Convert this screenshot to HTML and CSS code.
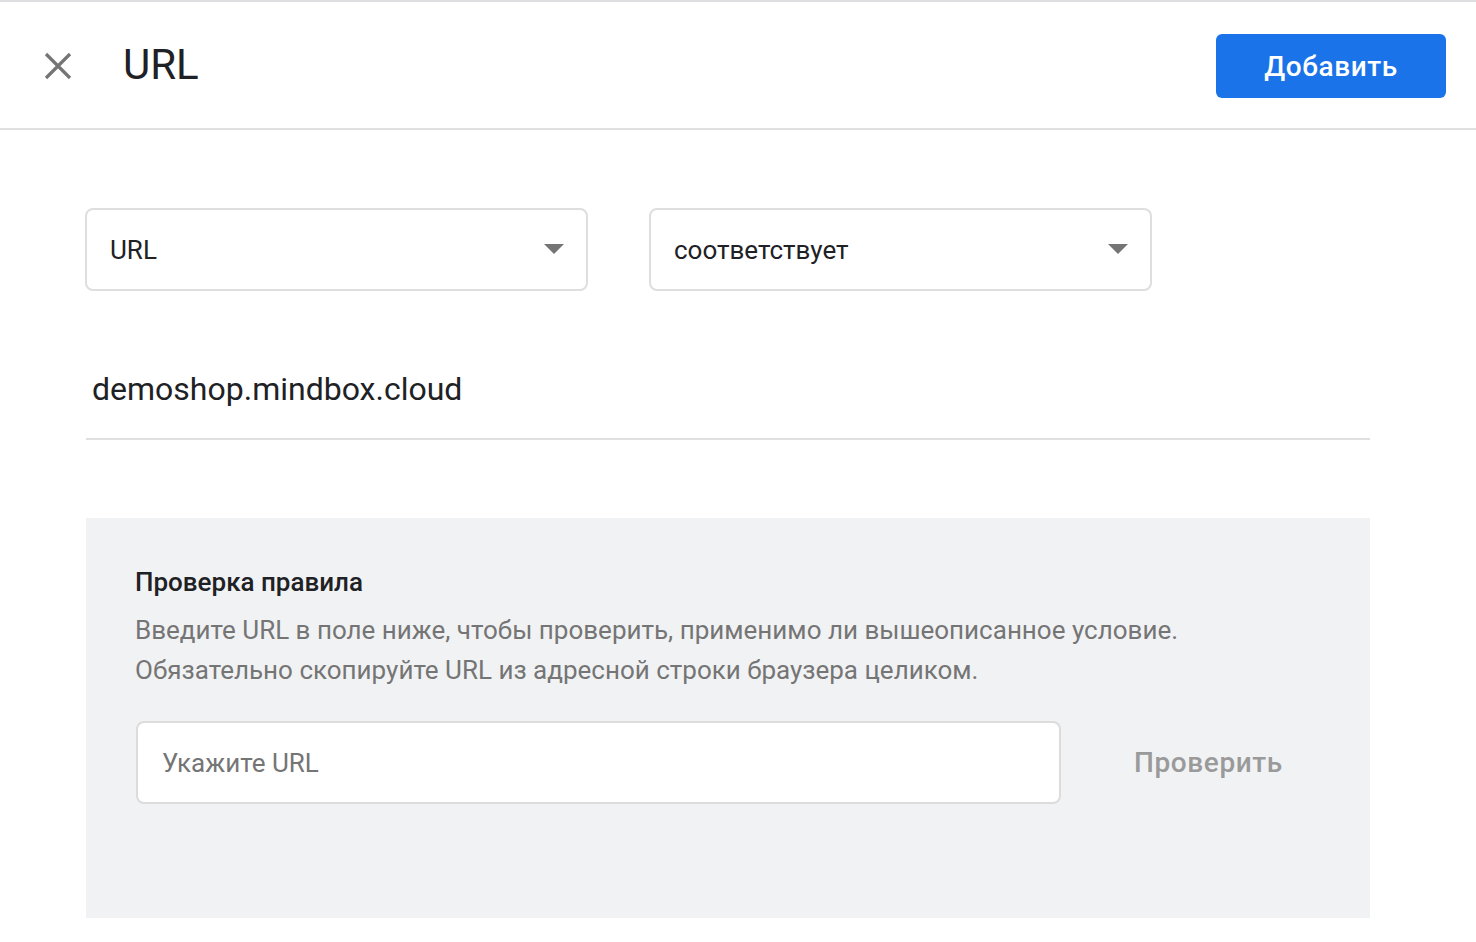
FILE: index.html
```html
<!DOCTYPE html>
<html lang="ru">
<head>
<meta charset="utf-8">
<title>URL</title>
<link rel="stylesheet" href="styles.css">
</head>
<body>
<header class="header">
  <button class="close" aria-label="Закрыть">
    <svg width="28" height="28" viewBox="0 0 28 28"><path d="M2 2 L26 26 M26 2 L2 26" stroke="#757575" stroke-width="3.2" fill="none"/></svg>
  </button>
  <h1 class="title">URL</h1>
  <button class="primary">Добавить</button>
</header>
<main class="main">
  <div class="selects">
    <div class="select"><span>URL</span><span class="arrow"></span></div>
    <div class="select"><span>соответствует</span><span class="arrow"></span></div>
  </div>
  <div class="field">demoshop.mindbox.cloud</div>
  <section class="panel">
    <h2 class="panel-title">Проверка правила</h2>
    <p class="panel-desc">Введите URL в поле ниже, чтобы проверить, применимо ли вышеописанное условие.<br>Обязательно скопируйте URL из адресной строки браузера целиком.</p>
    <div class="check-row">
      <div class="input">Укажите URL</div>
      <button class="check">Проверить</button>
    </div>
  </section>
</main>
</body>
</html>
```
FILE: styles.css
```css
* { box-sizing: border-box; }
html, body { margin: 0; padding: 0; background: #fff; }
body {
  font-family: Roboto, "Noto Sans", "Liberation Sans", sans-serif;
  color: #202124;
  border-top: 2px solid #dfdfe1;
}
.header {
  height: 128px;
  border-bottom: 2px solid #e0e0e0;
  display: flex;
  align-items: center;
  padding: 0 30px 0 44px;
}
.close {
  border: 0;
  background: none;
  padding: 0;
  width: 28px;
  height: 28px;
  display: flex;
  margin-top: 2px;
}
.title {
  margin: 0 0 0 51px;
  font-size: 42px;
  font-weight: 400;
  line-height: 52px;
  color: #202124;
  flex: 1;
}
.primary {
  width: 230px;
  height: 64px;
  border: 0;
  border-radius: 6px;
  background: #1a73e8;
  color: #fff;
  font-family: Roboto, "Noto Sans", sans-serif;
  font-size: 28px;
  font-weight: 500;
  letter-spacing: 0.6px;
  margin-top: 2px;
}
.main {
  width: 1284px;
  margin-left: 86px;
  padding-top: 78px;
}
.selects {
  display: flex;
  gap: 61px;
  margin-left: -1px;
}
.select {
  width: 503px;
  height: 83px;
  border: 2px solid #dedede;
  border-radius: 8px;
  display: flex;
  align-items: center;
  justify-content: space-between;
  padding: 0 22px 0 23px;
  font-size: 26px;
  color: #202124;
}
.arrow {
  width: 0;
  height: 0;
  border-left: 10px solid transparent;
  border-right: 10px solid transparent;
  border-top: 10px solid #757575;
  margin-top: -2px;
}
.field {
  margin-top: 74px;
  padding: 0 0 25px 6px;
  font-size: 32px;
  line-height: 48px;
  border-bottom: 2px solid #e0e0e0;
  color: #202124;
}
.panel {
  margin-top: 78px;
  background: #f1f2f4;
  padding: 48px 49px 114px;
}
.panel-title {
  margin: 0;
  font-size: 26px;
  line-height: 32px;
  font-weight: 500;
  color: #202124;
}
.panel-desc {
  margin: 12px 0 0;
  font-size: 26px;
  line-height: 40px;
  color: #757575;
}
.check-row {
  margin-top: 31px;
  display: flex;
  align-items: center;
  gap: 73px;
}
.input {
  width: 925px;
  height: 83px;
  margin-left: 1px;
  background: #fff;
  border: 2px solid #dcdcdc;
  border-radius: 8px;
  display: flex;
  align-items: center;
  padding-left: 24px;
  font-size: 26px;
  color: #757575;
}
.check {
  border: 0;
  background: none;
  padding: 0;
  font-family: Roboto, "Noto Sans", sans-serif;
  font-size: 28px;
  font-weight: 500;
  letter-spacing: 0.6px;
  color: #9a9a9a;
}
```
